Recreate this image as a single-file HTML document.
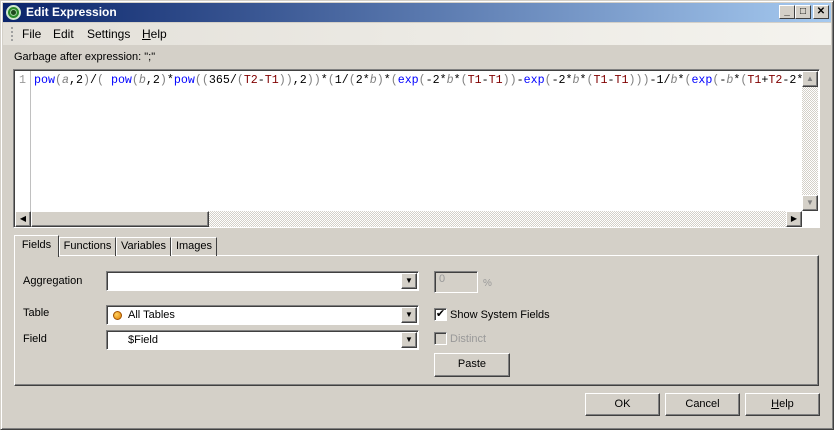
<!DOCTYPE html>
<html><head><meta charset="utf-8"><style>
*{box-sizing:border-box;margin:0;padding:0}
body{width:834px;height:430px;overflow:hidden;background:#d4d0c8;font-family:"Liberation Sans",sans-serif;font-size:11px;color:#000;position:relative}
.a{position:absolute}
.win{left:0;top:0;width:834px;height:430px;border:1px solid;border-color:#d4d0c8 #404040 #404040 #d4d0c8;box-shadow:inset 1px 1px #fff,inset -1px -1px #808080}
.title{left:3px;top:3px;width:828px;height:19px;background:linear-gradient(90deg,#0a246a,#a6caf0);color:#fff;font-weight:bold;font-size:12px}
.tb{width:16px;height:14px;top:2px;background:#d4d0c8;border:1px solid;border-color:#fff #404040 #404040 #fff;font-size:10px;color:#000;text-align:center;line-height:12px;font-weight:bold}
.menu{left:3px;top:23px;width:828px;height:22px;background:linear-gradient(90deg,#e3e0d9,#f4f3ee);font-size:12px}
.sunk{border:1px solid;border-color:#808080 #fff #fff #808080;box-shadow:inset 1px 1px #404040}
.btn{background:#d4d0c8;border:1px solid;border-color:#fff #404040 #404040 #fff;box-shadow:inset -1px -1px #808080;text-align:center}
.code{font-family:"Liberation Mono",monospace;font-size:11.65px;white-space:pre}
.f{color:#0000ff}.v{color:#808080;font-style:italic}.t{color:#800000}.p{color:#808080}
.hatch{background:repeating-conic-gradient(#d4d0c8 0 25%,#fff 0 50%) 0 0/2px 2px}
.combo{background:#fff;height:20px}
.arr{position:absolute;right:1px;top:1px;width:16px;height:16px}
.tab{top:237px;height:19px;border:1px solid;border-color:#fff #404040 transparent #fff;border-bottom:none;line-height:17px;text-align:center}
</style></head><body>
<div class="a win"></div>
<div class="a title">
 <div class="a" style="left:3px;top:2px;width:15px;height:15px;border-radius:50%;background:#2a8a2a;border:2px solid #cfe8cf"><div class="a" style="left:2px;top:2px;width:7px;height:7px;border-radius:50%;background:#1c4a1c;border:1px solid #9c9"></div></div>
 <div class="a" style="left:23px;top:2px">Edit Expression</div>
 <div class="a tb" style="left:776px">_</div>
 <div class="a tb" style="left:792px">□</div>
 <div class="a tb" style="left:810px">✕</div>
</div>
<div class="a menu">
 <div class="a" style="left:8px;top:4px;width:2px;height:14px;border-left:2px dotted #a0a0a0"></div>
 <div class="a" style="left:19px;top:4px">File</div>
 <div class="a" style="left:50px;top:4px">Edit</div>
 <div class="a" style="left:84px;top:4px">Settings</div>
 <div class="a" style="left:139px;top:4px"><u>H</u>elp</div>
</div>
<div class="a" style="left:14px;top:51px">Garbage after expression: ";"</div>
<div class="a sunk" style="left:13px;top:69px;width:807px;height:159px;background:#fff">
 <div class="a" style="left:16px;top:1px;width:1px;height:140px;background:#c0c0c0"></div>
 <div class="a code" style="left:5px;top:4px;color:#999">1</div>
 <div class="a code" style="left:20px;top:4px;width:768px;overflow:hidden"><span class="f">pow</span><span class="p">(</span><span class="v">a</span>,2<span class="p">)</span>/<span class="p">(</span> <span class="f">pow</span><span class="p">(</span><span class="v">b</span>,2<span class="p">)</span>*<span class="f">pow</span><span class="p">((</span>365/<span class="p">(</span><span class="t">T2</span>-<span class="t">T1</span><span class="p">))</span>,2<span class="p">))</span>*<span class="p">(</span>1/<span class="p">(</span>2*<span class="v">b</span><span class="p">)</span>*<span class="p">(</span><span class="f">exp</span><span class="p">(</span>-2*<span class="v">b</span>*<span class="p">(</span><span class="t">T1</span>-<span class="t">T1</span><span class="p">))</span>-<span class="f">exp</span><span class="p">(</span>-2*<span class="v">b</span>*<span class="p">(</span><span class="t">T1</span>-<span class="t">T1</span><span class="p">)))</span>-1/<span class="v">b</span>*<span class="p">(</span><span class="f">exp</span><span class="p">(</span>-<span class="v">b</span>*<span class="p">(</span><span class="t">T1</span>+<span class="t">T2</span>-2*</div>
 <div class="a hatch" style="left:788px;top:1px;width:16px;height:140px"></div>
 <div class="a btn" style="left:788px;top:1px;width:16px;height:16px;font-size:8px;line-height:13px;color:#808080">▲</div>
 <div class="a btn" style="left:788px;top:125px;width:16px;height:16px;font-size:8px;line-height:13px;color:#808080">▼</div>
 <div class="a hatch" style="left:1px;top:141px;width:787px;height:16px"></div>
 <div class="a btn" style="left:1px;top:141px;width:16px;height:16px;font-size:8px;line-height:13px">◀</div>
 <div class="a btn" style="left:17px;top:141px;width:178px;height:16px"></div>
 <div class="a btn" style="left:772px;top:141px;width:16px;height:16px;font-size:8px;line-height:13px">▶</div>
</div>
<div class="a" style="left:14px;top:255px;width:805px;height:131px;border:1px solid;border-color:#fff #404040 #404040 #fff;box-shadow:inset -1px -1px #808080"></div>
<div class="a tab" style="left:14px;top:235px;width:45px;height:22px;background:#d4d0c8;z-index:2;line-height:19px">Fields</div>
<div class="a tab" style="left:59px;width:57px">Functions</div>
<div class="a tab" style="left:116px;width:55px">Variables</div>
<div class="a tab" style="left:171px;width:46px">Images</div>
<div class="a" style="left:23px;top:275px">Aggregation</div>
<div class="a sunk combo" style="left:106px;top:271px;width:313px"><div class="btn arr" style="font-size:8px;line-height:14px">▼</div></div>
<div class="a sunk" style="left:434px;top:271px;width:44px;height:22px;color:#999;padding:1px 4px">0</div>
<div class="a" style="left:483px;top:278px;color:#999;font-size:10px">%</div>
<div class="a" style="left:23px;top:307px">Table</div>
<div class="a sunk combo" style="left:106px;top:305px;width:313px">
 <div class="a" style="left:6px;top:5px;width:9px;height:9px;border-radius:50%;background:radial-gradient(circle at 35% 35%,#ffd060,#e08000);border:1px solid #a05000"></div>
 <div class="a" style="left:21px;top:3px">All Tables</div>
 <div class="btn arr" style="font-size:8px;line-height:14px">▼</div></div>
<div class="a" style="left:23px;top:333px">Field</div>
<div class="a sunk combo" style="left:106px;top:330px;width:313px"><div class="a" style="left:21px;top:3px">$Field</div><div class="btn arr" style="font-size:8px;line-height:14px">▼</div></div>
<div class="a sunk" style="left:434px;top:308px;width:13px;height:13px;background:#fff;font-size:11px;line-height:10px;text-align:center">✔</div>
<div class="a" style="left:450px;top:309px">Show System Fields</div>
<div class="a sunk" style="left:434px;top:332px;width:13px;height:13px;background:#d4d0c8"></div>
<div class="a" style="left:450px;top:333px;color:#999">Distinct</div>
<div class="a btn" style="left:434px;top:353px;width:76px;height:24px;line-height:21px">Paste</div>
<div class="a btn" style="left:585px;top:393px;width:75px;height:23px;line-height:20px">OK</div>
<div class="a btn" style="left:665px;top:393px;width:75px;height:23px;line-height:20px">Cancel</div>
<div class="a btn" style="left:745px;top:393px;width:75px;height:23px;line-height:20px"><u>H</u>elp</div>
</body></html>
